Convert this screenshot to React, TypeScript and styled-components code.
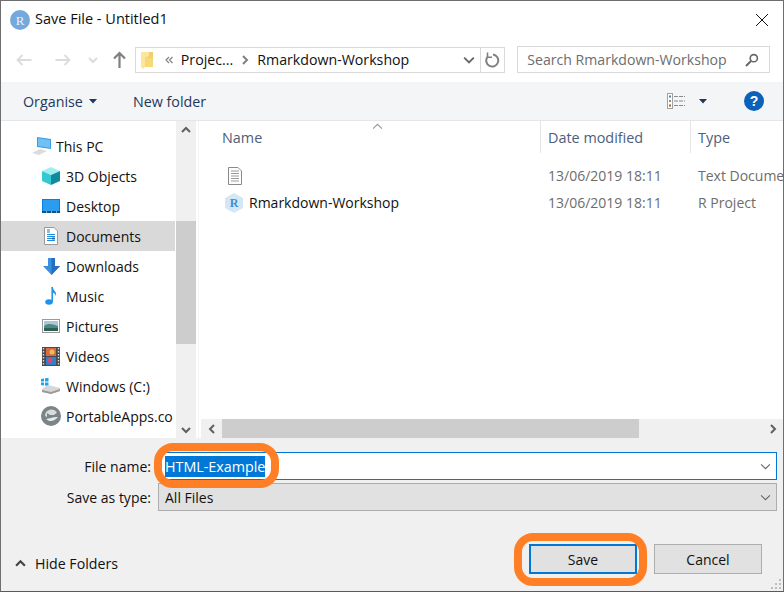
import React from 'react';
import styled, { createGlobalStyle } from 'styled-components';

const GlobalStyle = createGlobalStyle`
  html, body {
    margin: 0;
    padding: 0;
    background: #fff;
  }
  * {
    box-sizing: border-box;
  }
`;

const Window = styled.div`
  position: relative;
  width: 784px;
  height: 592px;
  display: flex;
  flex-direction: column;
  overflow: hidden;
  background: #fff;
  border: 1px solid #6e6e6e;
  border-bottom-color: #5a5a5a;
  font-family: 'Open Sans', 'Noto Sans', sans-serif;
  font-size: 14px;
  color: #111;
`;

const TitleBar = styled.div`
  height: 37px;
  flex: none;
  display: flex;
  align-items: center;
  padding-left: 9px;
  gap: 5px;
`;

const TitleText = styled.span`
  flex: 1;
  font-size: 14.5px;
  padding-bottom: 2px;
`;

const CloseBox = styled.div`
  width: 14px;
  height: 14px;
  margin-right: 14px;
  display: flex;
`;

const AddressRow = styled.div`
  height: 44px;
  flex: none;
  display: flex;
  align-items: flex-start;
  padding: 8px 13px 0 15px;
`;

const NavArrows = styled.div`
  width: 119px;
  height: 27px;
  display: flex;
  align-items: center;
`;

const NavSlot = styled.span<{ $gap?: number }>`
  display: flex;
  margin-left: ${(p) => p.$gap ?? 0}px;
`;

const AddressBox = styled.div`
  width: 371px;
  height: 26px;
  margin-top: 1px;
  display: flex;
  align-items: center;
  border: 1px solid #d9d9d9;
  padding-left: 5px;
`;

const Crumb = styled.span<{ $gap?: number }>`
  font-size: 14.2px;
  white-space: nowrap;
  padding-bottom: 2px;
  margin-left: ${(p) => p.$gap ?? 0}px;
`;

const AddressSpacer = styled.div`
  flex: 1;
`;

const RefreshCell = styled.div`
  width: 24px;
  height: 100%;
  display: flex;
  align-items: center;
  justify-content: center;
  border-left: 1px solid #d9d9d9;
`;

const SearchBox = styled.div`
  width: 253px;
  height: 27px;
  margin-left: 12px;
  display: flex;
  align-items: center;
  justify-content: space-between;
  padding: 0 10px 0 9px;
  border: 1px solid #d9d9d9;
  color: #6d6d6d;
  font-size: 14.1px;
`;

const Toolbar = styled.div`
  height: 39px;
  flex: none;
  display: flex;
  align-items: center;
  padding: 0 19px 0 22px;
  background: #f4f5f7;
  border-bottom: 1px solid #e6e6e6;
  color: #1e395b;
  font-size: 14.3px;
`;

const ToolButton = styled.span`
  display: flex;
  align-items: center;
  gap: 6px;
  margin-right: 36px;
`;

const ToolSpacer = styled.div`
  flex: 1;
`;

const ToolIcons = styled.div`
  display: flex;
  align-items: center;
`;

const Body = styled.div`
  height: 317px;
  flex: none;
  display: flex;
`;

const NavPane = styled.div`
  width: 174px;
  margin-right: 1px;
  flex: none;
  padding-top: 10px;
  overflow: hidden;
`;

const NavRow = styled.div<{ $selected?: boolean; $root?: boolean }>`
  height: 30px;
  display: flex;
  align-items: center;
  white-space: nowrap;
  gap: ${(p) => (p.$root ? '4px' : '5px')};
  padding-left: ${(p) => (p.$root ? '31px' : '40px')};
  background: ${(p) => (p.$selected ? '#d9d9d9' : 'transparent')};
`;

const NavIcon = styled.span`
  width: 20px;
  height: 20px;
  flex: none;
  display: flex;
  align-items: center;
  justify-content: center;
`;

const VScroll = styled.div`
  width: 20px;
  flex: none;
  display: flex;
  flex-direction: column;
  background: #f0f0f0;
`;

const ScrollArrow = styled.div<{ $wide?: boolean }>`
  width: ${(p) => (p.$wide ? '21px' : '20px')};
  height: ${(p) => (p.$wide ? '19px' : '17px')};
  flex: none;
  display: flex;
  align-items: center;
  justify-content: center;
`;

const VTrackTop = styled.div`
  height: 83px;
  flex: none;
`;

const VThumb = styled.div`
  height: 123px;
  flex: none;
  background: #cdcdcd;
`;

const ScrollFill = styled.div`
  flex: 1;
`;

const Main = styled.div`
  flex: 1;
  min-width: 0;
  margin-left: 2px;
  border-left: 1px solid #f5f5f5;
  padding-left: 2px;
  display: flex;
  flex-direction: column;
`;

const HeaderRow = styled.div`
  height: 32px;
  flex: none;
  display: flex;
  color: #4c607a;
  font-size: 14.4px;
`;

const HeaderCell = styled.div<{ $w: number }>`
  position: relative;
  width: ${(p) => p.$w}px;
  flex: none;
  display: flex;
  align-items: center;
  padding-left: 7px;
  border-right: 1px solid #e5e5e5;
  &:last-child {
    flex: 1;
    border-right: 0;
  }
`;

const NameHeader = styled(HeaderCell)`
  padding-left: 21px;
`;

const SortCaret = styled.span`
  position: absolute;
  left: 171px;
  top: 0;
  display: flex;
`;

const FileList = styled.div`
  flex: 1;
  padding-top: 9px;
  overflow: hidden;
`;

const FileRow = styled.div`
  height: 27px;
  display: flex;
  align-items: center;
  white-space: nowrap;
`;

const FileNameCell = styled.div<{ $inset?: number }>`
  width: 340px;
  flex: none;
  display: flex;
  align-items: center;
  gap: 5px;
  padding-left: ${(p) => p.$inset ?? 23}px;
`;

const FileMeta = styled.div<{ $w: number }>`
  width: ${(p) => p.$w}px;
  flex: none;
  padding-left: 7px;
  color: #6d6d6d;
`;

const HScroll = styled.div`
  height: 19px;
  flex: none;
  display: flex;
  background: #f0f0f0;
`;

const HThumb = styled.div`
  width: 417px;
  background: #cdcdcd;
`;

const Footer = styled.div`
  flex: 1;
  position: relative;
  display: flex;
  flex-direction: column;
  background: #f0f0f0;
  padding-top: 14px;
`;

const FieldRow = styled.div`
  height: 28px;
  margin-bottom: 3px;
  display: flex;
  align-items: center;
  padding-right: 6px;
`;

const FieldLabel = styled.label`
  width: 151px;
  flex: none;
  text-align: right;
  padding-right: 1px;
`;

const Combo = styled.div<{ $focused?: boolean }>`
  width: 619px;
  margin-left: 6px;
  height: 28px;
  display: flex;
  align-items: center;
  justify-content: space-between;
  padding: 0 5px 0 6px;
  border: 1px solid ${(p) => (p.$focused ? '#0078d7' : '#adadad')};
  background: ${(p) => (p.$focused ? '#fff' : '#e1e1e1')};
`;

const Selected = styled.span`
  background: #0078d7;
  color: #fff;
  font-size: 14.3px;
  line-height: 21px;
  height: 21px;
`;

const ActionRow = styled.div`
  display: flex;
  align-items: center;
  margin-top: 30px;
  padding-left: 14px;
`;

const HideFolders = styled.div`
  flex: 1;
  display: flex;
  align-items: center;
  gap: 9px;
  margin-top: 8px;
  font-size: 14.2px;
`;

const Button = styled.div<{ $primary?: boolean }>`
  width: 108px;
  height: 30px;
  display: flex;
  align-items: center;
  justify-content: center;
  background: #e1e1e1;
  border: ${(p) => (p.$primary ? '2px solid #0078d7' : '1px solid #adadad')};
  margin-left: ${(p) => (p.$primary ? '0' : '17px')};
`;

const ActionButtons = styled.div`
  display: flex;
  margin-right: 21px;
`;

const Callout = styled.div<{ $x: number; $y: number; $w: number; $h: number }>`
  position: absolute;
  left: ${(p) => p.$x}px;
  top: ${(p) => p.$y}px;
  width: ${(p) => p.$w}px;
  height: ${(p) => p.$h}px;
  border: 8px solid #ff7f27;
  border-radius: 19px;
  pointer-events: none;
`;

const Grip = styled.svg`
  position: absolute;
  right: 1px;
  bottom: 1px;
`;

const RLogo = () => (
  <svg width="20" height="20" viewBox="0 0 20 20">
    <circle cx="10" cy="10" r="10" fill="#75a9dc" />
    <text x="10" y="14.5" textAnchor="middle" fontFamily="Liberation Serif, serif" fontSize="13" fill="#e8f1fa">R</text>
  </svg>
);

const Close = () => (
  <svg width="14" height="14" viewBox="0 0 14 14">
    <path d="M1 1 L13 13 M13 1 L1 13" stroke="#111" strokeWidth="1" fill="none" />
  </svg>
);

const Arrow = ({ dir, color }: { dir: 'left' | 'right'; color: string }) => (
  <svg width="16" height="12" viewBox="0 0 16 12" style={{ transform: dir === 'right' ? 'scaleX(-1)' : undefined }}>
    <path d="M15.5 6 H2 M6.5 1 L1.5 6 L6.5 11" stroke={color} strokeWidth="1.8" fill="none" />
  </svg>
);

const UpArrow = () => (
  <svg width="13" height="17" viewBox="0 0 13 17">
    <path d="M6.5 17 V2 M1 7.5 L6.5 2 L12 7.5" stroke="#808080" strokeWidth="2.2" fill="none" />
  </svg>
);

const Chevron = ({ dir, color, size = 10, width = 2 }: { dir: 'up' | 'down' | 'left' | 'right'; color: string; size?: number; width?: number }) => {
  const d = {
    up: 'M1 7 L5 3 L9 7',
    down: 'M1 3 L5 7 L9 3',
    left: 'M7 1 L3 5 L7 9',
    right: 'M3 1 L7 5 L3 9',
  }[dir];
  return (
    <svg width={size} height={size} viewBox="0 0 10 10">
      <path d={d} stroke={color} strokeWidth={width} fill="none" />
    </svg>
  );
};

const DoubleChevron = () => (
  <svg width="8" height="8" viewBox="0 0 8 8">
    <path d="M4 1 L1 4 L4 7 M7.5 1 L4.5 4 L7.5 7" stroke="#808080" strokeWidth="1.2" fill="none" />
  </svg>
);

const Caret = () => (
  <svg width="8" height="5" viewBox="0 0 8 5">
    <path d="M0 0 H8 L4 4.5 Z" fill="#1e395b" />
  </svg>
);

const FolderIcon = () => (
  <svg width="12" height="17" viewBox="0 0 12 17">
    <path d="M3 0 H12 V15 L3 15 Z" fill="#f0cf6c" />
    <path d="M0 0 H8 V4 L4 6 V15 L2 17 L0 15 Z" fill="#fde69a" />
    <path d="M4 6 H12 V15 H4 Z" fill="#f8d97a" />
  </svg>
);

const Refresh = () => (
  <svg width="15" height="16" viewBox="0 0 15 16">
    <path d="M8 2.6 A6 6 0 1 1 2.4 5" stroke="#808080" strokeWidth="2" fill="none" />
    <path d="M2.5 0.5 V5.2 H7" stroke="#808080" strokeWidth="1.6" fill="none" />
  </svg>
);

const SearchGlass = () => (
  <svg width="14" height="14" viewBox="0 0 14 14">
    <circle cx="8.8" cy="5.2" r="3.6" stroke="#666" strokeWidth="1.6" fill="none" />
    <path d="M6 8 L1 13" stroke="#666" strokeWidth="2" />
  </svg>
);

const ViewIcon = () => (
  <svg width="18" height="16" viewBox="0 0 18 16" style={{ marginRight: 14 }}>
    <rect x="0.5" y="0.5" width="5" height="15" fill="#fff" stroke="#a0a0a0" />
    <rect x="2" y="2.5" width="2" height="2" fill="#5a7fa8" />
    <rect x="2" y="7" width="2" height="2" fill="#7a9c5a" />
    <rect x="2" y="11.5" width="2" height="2" fill="#c0503a" />
    <path d="M7 3.5 H18 M7 8 H18 M7 12.5 H18" stroke="#8a8a8a" strokeWidth="1" strokeDasharray="4 1" />
  </svg>
);

const Help = () => (
  <svg width="20" height="20" viewBox="0 0 20 20" style={{ marginLeft: 37 }}>
    <circle cx="10" cy="10" r="10" fill="#0a63b8" />
    <text x="10" y="15" textAnchor="middle" fontFamily="Liberation Sans, sans-serif" fontWeight="700" fontSize="14" fill="#fff">?</text>
  </svg>
);

const PcIcon = () => (
  <svg width="20" height="18" viewBox="0 0 20 18">
    <path d="M5 0 L19 2 V12 L5 10 Z" fill="#3e9de8" />
    <path d="M6 1.2 L18 3 V10.8 L6 9 Z" fill="#6fc0f4" />
    <path d="M0 16 L8 12 L15 14 L7 18 Z" fill="#dcdcdc" />
  </svg>
);

const CubeIcon = () => (
  <svg width="18" height="18" viewBox="0 0 18 18">
    <path d="M9 0 L18 4 L9 8 L0 4 Z" fill="#a0f0f2" />
    <path d="M0 4 L9 8 V18 L0 14 Z" fill="#35c8d2" />
    <path d="M18 4 L9 8 V18 L18 14 Z" fill="#128a9e" />
  </svg>
);

const DesktopIcon = () => (
  <svg width="18" height="14" viewBox="0 0 18 14">
    <rect width="18" height="13" fill="#0a7fd9" />
    <rect x="1" y="1" width="16" height="11" fill="#2a9df0" />
    <rect y="12" width="18" height="2" fill="#15517f" />
    <path d="M4 13 H5 M9 13 H10 M14 13 H15" stroke="#fff" />
  </svg>
);

const DocsIcon = () => (
  <svg width="14" height="18" viewBox="0 0 14 18">
    <path d="M0.5 0.5 H10 L13.5 4 V17.5 H0.5 Z" fill="#fff" stroke="#9a9a9a" />
    <path d="M3 3 H6 M3 5 H6" stroke="#1f7fd0" strokeWidth="1.2" />
    <path d="M3 7.5 H11 M3 9.5 H11 M3 11.5 H8 M3 13.5 H11" stroke="#1f8ee0" />
    <rect x="8" y="10.5" width="3" height="2" fill="#3a6a8c" />
  </svg>
);

const DownloadIcon = () => (
  <svg width="17" height="17" viewBox="0 0 17 17">
    <path d="M5 0 H12 V8 H17 L8.5 17 L0 8 H5 Z" fill="#3a8fe0" />
    <path d="M8.5 0 H12 V8 H17 L8.5 17 Z" fill="#2370bf" />
  </svg>
);

const MusicIcon = () => (
  <svg width="12" height="18" viewBox="0 0 12 18">
    <ellipse cx="4" cy="15" rx="3.8" ry="2.8" fill="#1d95ef" />
    <path d="M6.4 15 V0 H8 C8 4 12 4 11 9 C10 6.5 9 6 8 6 V15 Z" fill="#1d95ef" />
  </svg>
);

const PicturesIcon = () => (
  <svg width="18" height="14" viewBox="0 0 18 14">
    <rect x="0.5" y="0.5" width="17" height="13" fill="#fff" stroke="#9a9a9a" />
    <rect x="2" y="2" width="14" height="5" fill="#a8c8e0" />
    <path d="M2 7 C6 4 10 5 16 7 V12 H2 Z" fill="#4e8a80" />
    <rect x="2" y="9" width="14" height="3" fill="#2e5f55" />
  </svg>
);

const VideosIcon = () => (
  <svg width="18" height="19" viewBox="0 0 18 19">
    <rect width="18" height="19" fill="#4a4a4a" />
    <path d="M1.5 1 V18 M16.5 1 V18" stroke="#d8d8d8" strokeWidth="1.4" strokeDasharray="1.5 1.5" />
    <rect x="4" y="1" width="10" height="8" fill="#d86a4a" />
    <rect x="4" y="10" width="10" height="8" fill="#2e7fcf" />
    <circle cx="10" cy="5" r="2.5" fill="#e8c04a" />
    <circle cx="8" cy="13.5" r="2.5" fill="#d84a6a" />
  </svg>
);

const DriveIcon = () => (
  <svg width="20" height="16" viewBox="0 0 20 16">
    <path d="M0 1 L3 .5 V3.5 H0 Z M4 .3 L7.5 0 V3.5 H4 Z M0 4.5 H3 V7.5 L0 7 Z M4 4.5 H7.5 V8 L4 7.6 Z" fill="#16a5ee" />
    <path d="M1 11 L7 7 L19 10 V13 L10 16 L1 14 Z" fill="#d6d6d6" />
    <path d="M1 12 L10 14 L19 11 V13 L10 16 L1 14 Z" fill="#9a9a9a" />
  </svg>
);

const PortableIcon = () => (
  <svg width="20" height="20" viewBox="0 0 20 20">
    <circle cx="10" cy="10" r="10" fill="#7b8487" />
    <path d="M4 10 A6.5 6.5 0 0 1 16 6.5 L13 9 H9 L6 7 V11 Z" fill="#d8dcdd" />
    <path d="M5 13 C8 16 13 16 17 11 C15 11 12 11 10 12 Z" fill="#e8eaeb" />
  </svg>
);

const TextFileIcon = () => (
  <svg width="14" height="18" viewBox="0 0 14 18">
    <path d="M0.5 0.5 H10 L13.5 4 V17.5 H0.5 Z" fill="#fff" stroke="#8a8a8a" />
    <path d="M3 4 H11 M3 6.5 H11 M3 9 H11 M3 11.5 H11 M3 14 H11" stroke="#9a9a9a" />
  </svg>
);

const RProjectIcon = () => (
  <svg width="20" height="20" viewBox="0 0 20 20">
    <path d="M10 0 L19 5 V15 L10 20 L1 15 V5 Z" fill="#d3e8f4" />
    <text x="10" y="14" textAnchor="middle" fontFamily="Liberation Serif, serif" fontWeight="700" fontSize="12" fill="#3f8fd6">R</text>
  </svg>
);

const navItems: { label: string; icon: React.ReactNode; selected?: boolean; root?: boolean }[] = [
  { label: 'This PC', icon: <PcIcon />, root: true },
  { label: '3D Objects', icon: <CubeIcon /> },
  { label: 'Desktop', icon: <DesktopIcon /> },
  { label: 'Documents', icon: <DocsIcon />, selected: true },
  { label: 'Downloads', icon: <DownloadIcon /> },
  { label: 'Music', icon: <MusicIcon /> },
  { label: 'Pictures', icon: <PicturesIcon /> },
  { label: 'Videos', icon: <VideosIcon /> },
  { label: 'Windows (C:)', icon: <DriveIcon /> },
  { label: 'PortableApps.co', icon: <PortableIcon /> },
];

const App: React.FC = () => {
  return (
    <>
      <GlobalStyle />
      <Window>
        <TitleBar>
          <RLogo />
          <TitleText>Save File - Untitled1</TitleText>
          <CloseBox>
            <Close />
          </CloseBox>
        </TitleBar>

        <AddressRow>
          <NavArrows>
            <NavSlot>
              <Arrow dir="left" color="#dcdcdc" />
            </NavSlot>
            <NavSlot $gap={23}>
              <Arrow dir="right" color="#dcdcdc" />
            </NavSlot>
            <NavSlot $gap={17}>
              <Chevron dir="down" color="#dcdcdc" />
            </NavSlot>
            <NavSlot $gap={15}>
              <UpArrow />
            </NavSlot>
          </NavArrows>
          <AddressBox>
            <FolderIcon />
            <NavSlot $gap={12}>
              <DoubleChevron />
            </NavSlot>
            <Crumb $gap={8}>Projec...</Crumb>
            <NavSlot $gap={7}>
              <Chevron dir="right" color="#808080" />
            </NavSlot>
            <Crumb $gap={7}>Rmarkdown-Workshop</Crumb>
            <AddressSpacer />
            <span style={{ marginRight: 5, display: 'flex' }}>
              <Chevron dir="down" color="#666" size={12} width={1.6} />
            </span>
            <RefreshCell>
              <Refresh />
            </RefreshCell>
          </AddressBox>
          <SearchBox>
            <span>Search Rmarkdown-Workshop</span>
            <SearchGlass />
          </SearchBox>
        </AddressRow>

        <Toolbar>
          <ToolButton>
            Organise <Caret />
          </ToolButton>
          <ToolButton>New folder</ToolButton>
          <ToolSpacer />
          <ToolIcons>
            <ViewIcon />
            <Caret />
            <Help />
          </ToolIcons>
        </Toolbar>

        <Body>
          <NavPane>
            {navItems.map((item) => (
              <NavRow key={item.label} $selected={item.selected} $root={item.root}>
                <NavIcon>{item.icon}</NavIcon>
                {item.label}
              </NavRow>
            ))}
          </NavPane>
          <VScroll>
            <ScrollArrow>
              <Chevron dir="up" color="#606060" />
            </ScrollArrow>
            <VTrackTop />
            <VThumb />
            <ScrollFill />
            <ScrollArrow>
              <Chevron dir="down" color="#606060" />
            </ScrollArrow>
          </VScroll>
          <Main>
            <HeaderRow>
              <NameHeader $w={340}>
                Name
                <SortCaret>
                  <Chevron dir="up" color="#9a9a9a" size={11} width={1} />
                </SortCaret>
              </NameHeader>
              <HeaderCell $w={150}>Date modified</HeaderCell>
              <HeaderCell $w={100}>Type</HeaderCell>
            </HeaderRow>
            <FileList>
              <FileRow>
                <FileNameCell $inset={27}>
                  <TextFileIcon />
                </FileNameCell>
                <FileMeta $w={150}>13/06/2019 18:11</FileMeta>
                <FileMeta $w={90}>Text Docume</FileMeta>
              </FileRow>
              <FileRow>
                <FileNameCell>
                  <RProjectIcon />
                  Rmarkdown-Workshop
                </FileNameCell>
                <FileMeta $w={150}>13/06/2019 18:11</FileMeta>
                <FileMeta $w={90}>R Project</FileMeta>
              </FileRow>
            </FileList>
            <HScroll>
              <ScrollArrow $wide>
                <Chevron dir="left" color="#606060" />
              </ScrollArrow>
              <HThumb />
              <ScrollFill />
              <ScrollArrow $wide>
                <Chevron dir="right" color="#606060" />
              </ScrollArrow>
            </HScroll>
          </Main>
        </Body>

        <Footer>
          <FieldRow>
            <FieldLabel>File name:</FieldLabel>
            <Combo $focused>
              <Selected>HTML-Example</Selected>
              <Chevron dir="down" color="#666" size={11} width={1} />
            </Combo>
          </FieldRow>
          <FieldRow>
            <FieldLabel>Save as type:</FieldLabel>
            <Combo>
              <span>All Files</span>
              <Chevron dir="down" color="#666" size={11} width={1} />
            </Combo>
          </FieldRow>
          <ActionRow>
            <HideFolders>
              <Chevron dir="up" color="#444" size={11} width={2} />
              Hide Folders
            </HideFolders>
            <ActionButtons>
              <Button $primary>Save</Button>
              <Button>Cancel</Button>
            </ActionButtons>
          </ActionRow>
          <Grip width="11" height="11" viewBox="0 0 11 11">
            <path d="M8 0h2v2H8z M8 4h2v2H8z M4 4h2v2H4z M8 8h2v2H8z M4 8h2v2H4z M0 8h2v2H0z" fill="#bdbdbd" />
          </Grip>
        </Footer>

        <Callout $x={153} $y={442} $w={125} $h={45} />
        <Callout $x={513} $y={532} $w={133} $h={53} />
      </Window>
    </>
  );
};

export default App;
